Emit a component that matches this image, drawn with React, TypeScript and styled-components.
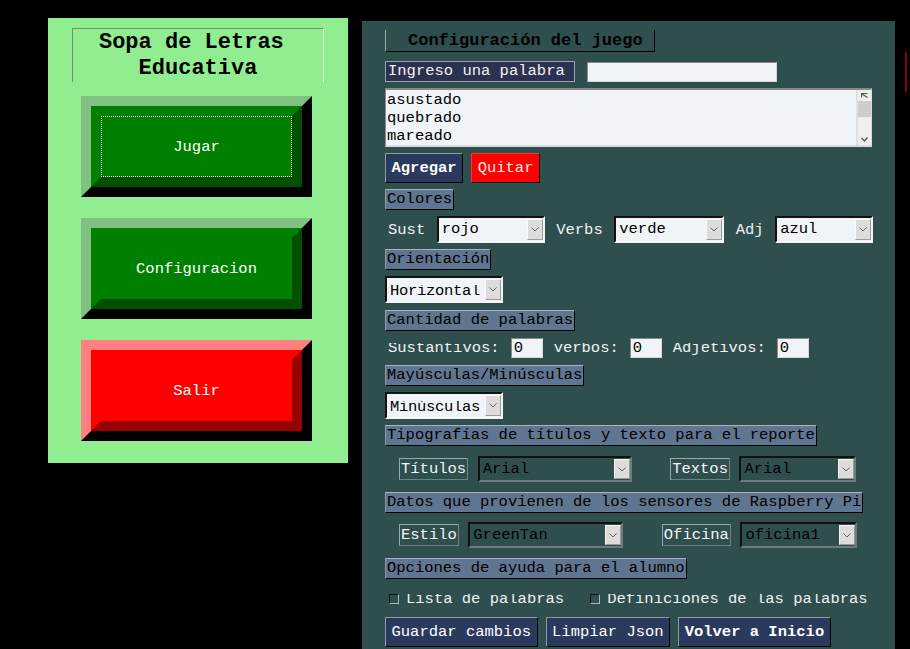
import React from "react";
import styled, { createGlobalStyle, css } from "styled-components";

type Tone = "green" | "red";

const tones: Record<Tone, { face: string; light: string; dark: string }> = {
  green: { face: "#008000", light: "#80c080", dark: "#005000" },
  red: { face: "#ff0000", light: "#ff8080", dark: "#990000" },
};

const GlobalStyle = createGlobalStyle`
  html, body {
    margin: 0;
    padding: 0;
    background: #000;
  }
  body {
    font-family: "Liberation Mono", "Courier New", monospace;
    font-size: 15.5px;
  }
  * {
    box-sizing: border-box;
  }
`;

const Page = styled.div`
  display: flex;
  align-items: flex-start;
  width: 910px;
  height: 649px;
  overflow: hidden;
  background: #000;
`;

/* ---------- left menu ---------- */

const MenuPanel = styled.section`
  margin: 18px 0 0 48px;
  width: 300px;
  height: 445px;
  padding-top: 10px;
  background: #90ee90;
  display: flex;
  flex-direction: column;
  align-items: flex-start;
`;

const TitleBox = styled.h1`
  margin: 0 0 0 24px;
  width: 252px;
  height: 54px;
  padding-top: 1px;
  border-top: 1px solid #6f8f6f;
  border-left: 1px solid #6f8f6f;
  border-right: 1px solid #e6ffe6;
  font-size: 22px;
  font-weight: bold;
  line-height: 26px;
  text-align: center;
  color: #000;
  white-space: pre;
`;

const BevelButton = styled.button<{ $tone: Tone; $first?: boolean }>`
  display: block;
  margin: ${({ $first }) => ($first ? "14px" : "21px")} 0 0 33px;
  width: 231px;
  height: 101px;
  padding: 0;
  border: 10px solid;
  border-color: ${({ $tone }) =>
    `${tones[$tone].light} #000 #000 ${tones[$tone].light}`};
  background: ${({ $tone }) => tones[$tone].face};
  font: inherit;
  cursor: pointer;
`;

const BevelFace = styled.span<{ $tone: Tone }>`
  display: flex;
  height: 100%;
  border: 10px solid;
  border-color: ${({ $tone }) => {
    const t = tones[$tone];
    return `${t.face} ${t.dark} ${t.dark} ${t.face}`;
  }};
`;

const BevelLabel = styled.span<{ $focused?: boolean }>`
  flex: 1;
  display: flex;
  align-items: center;
  justify-content: center;
  color: #fff;
  font-size: 15.5px;
  border: 1px solid transparent;
  ${({ $focused }) =>
    $focused &&
    css`
      border: 1px dotted #fbe6fb;
    `}
`;

/* ---------- right settings ---------- */

const SettingsPanel = styled.section`
  margin: 21px 0 0 14px;
  width: 533px;
  height: 640px;
  padding: 9px 0 0 23px;
  background: #2f4f4f;
  display: flex;
  flex-direction: column;
  align-items: flex-start;
`;

const EdgeMark = styled.div`
  margin: 52px 0 0 10px;
  width: 2px;
  height: 40px;
  background: #8b0000;
`;

const Row = styled.div<{ $mt: number; $gap?: number; $indent?: number }>`
  display: flex;
  align-items: center;
  margin-top: ${({ $mt }) => $mt}px;
  gap: ${({ $gap }) => $gap ?? 0}px;
  padding-left: ${({ $indent }) => $indent ?? 0}px;
`;

const PanelTitle = styled.div`
  height: 22px;
  padding: 0 11px 0 22px;
  border-left: 1px solid #9aa8a8;
  border-right: 1px solid #000;
  border-bottom: 1px solid #000;
  font-size: 17px;
  font-weight: bold;
  line-height: 21px;
  color: #000;
`;

const Heading = styled.div<{ $mt: number }>`
  margin-top: ${({ $mt }) => $mt}px;
  height: 21px;
  padding: 0 1px 0 1px;
  border: 1px solid;
  border-color: #a9b4c2 #000 #000 #8d99aa;
  background: #5f7590;
  line-height: 19px;
  color: #000;
  white-space: pre;
`;

const Caption = styled.div`
  height: 21px;
  padding: 0 9px 0 2px;
  border: 1px solid #9aa4b2;
  background: #2c3150;
  color: #f2f2f2;
  line-height: 19px;
`;

const TextEntry = styled.div<{ $w: number; $h?: number }>`
  width: ${({ $w }) => $w}px;
  height: ${({ $h }) => $h ?? 20}px;
  padding-left: 2px;
  border-top: 1px solid #8a8a8a;
  border-left: 1px solid #8a8a8a;
  border-bottom: 1px solid #d8d8d8;
  border-right: 1px solid #d8d8d8;
  background: #f0f4f8;
  color: #000;
  line-height: 18px;
`;

const Listbox = styled.div`
  display: flex;
  width: 487px;
  height: 59px;
  border-top: 2px solid #8a8a8a;
  border-left: 1px solid #8a8a8a;
  border-bottom: 2px solid #d8dce0;
  border-right: 1px solid #d8dce0;
  background: #f0f4f8;
`;

const ListItems = styled.ul`
  flex: 1;
  margin: 0;
  padding: 1px 0 0 1px;
  list-style: none;
  line-height: 18px;
  color: #000;
  overflow: hidden;
`;

const Scrollbar = styled.div`
  width: 15px;
  display: flex;
  flex-direction: column;
  align-items: center;
  background: #efefef;
  border-left: 2px solid #dde1e5;
`;

const ScrollThumb = styled.div`
  width: 13px;
  height: 16px;
  margin-top: 3px;
  background: #cdcdcd;
`;

const ScrollArrow = styled.svg<{ $mt?: string }>`
  display: block;
  margin-top: ${({ $mt }) => $mt ?? "4px"};
`;

const ActionButton = styled.button<{ $bold?: boolean; $danger?: boolean }>`
  height: 30px;
  padding: 0 5.5px;
  border: 1px solid;
  border-color: ${({ $danger }) =>
    $danger ? "#ff3030 #000 #000 #ff3030" : "#8c9ab0 #000 #000 #8c9ab0"};
  background: ${({ $danger }) => ($danger ? "#ff0000" : "#2a3a5c")};
  color: ${({ $danger }) => ($danger ? "#ffe8e8" : "#fff")};
  font: inherit;
  font-weight: ${({ $bold }) => ($bold ? "bold" : "normal")};
  white-space: pre;
  cursor: pointer;
`;

const FieldText = styled.span<{ $clip?: boolean }>`
  color: #eef2f2;
  white-space: pre;
  ${({ $clip }) =>
    $clip &&
    css`
      clip-path: inset(4px 0 0 0);
    `}
`;

const Combo = styled.div<{ $w: number; $dark?: boolean; $h?: number }>`
  display: flex;
  align-items: stretch;
  width: ${({ $w }) => $w}px;
  height: ${({ $h }) => $h ?? 27}px;
  border-top: 2px solid #111;
  border-left: 2px solid #111;
  border-bottom: 2px solid ${({ $dark }) => ($dark ? "#6c7c7c" : "#f4f4f4")};
  border-right: 2px solid ${({ $dark }) => ($dark ? "#6c7c7c" : "#f4f4f4")};
  background: ${({ $dark }) => ($dark ? "#2f4f4f" : "#f0f4f8")};
  color: #000;
`;

const ComboValue = styled.span<{ $clip?: boolean }>`
  flex: 1;
  padding-left: 3px;
  line-height: 22px;
  white-space: pre;
  overflow: hidden;
  ${({ $clip }) =>
    $clip &&
    css`
      padding-top: 2px;
      clip-path: inset(7px 0 0 0);
      letter-spacing: -0.3px;
    `}
`;

const DropButton = styled.span`
  width: 16px;
  margin: 1px 0 1px 0;
  display: flex;
  align-items: center;
  justify-content: center;
  background: #dcdcdc;
  border: 1px solid;
  border-color: #f8f8f8 #9a9a9a #9a9a9a #f8f8f8;
`;

const BoxLabel = styled.span<{ $push?: number }>`
  height: 22px;
  margin-left: ${({ $push }) => $push ?? 0}px;
  padding: 0 1px;
  border: 1px solid;
  border-color: #93abab #6b8383 #6b8383 #93abab;
  color: #f2f6f6;
  line-height: 20px;
`;

const CheckItem = styled.label`
  display: flex;
  align-items: center;
  gap: 7px;
  color: #eef2f2;
`;

const CheckBox = styled.span`
  width: 10px;
  height: 10px;
  border: 1px solid;
  border-color: #101010 #b0b8b8 #b0b8b8 #101010;
`;

const Chevron = () => (
  <svg width="8" height="5" viewBox="0 0 8 5">
    <polyline points="0.5,0.5 4,4 7.5,0.5" fill="none" stroke="#666" strokeWidth="1" />
  </svg>
);

const ComboBox: React.FC<{
  value: string;
  width: number;
  dark?: boolean;
  clip?: boolean;
}> = ({ value, width, dark, clip }) => (
  <Combo $w={width} $dark={dark} $h={dark ? 26 : 27}>
    <ComboValue $clip={clip}>{value}</ComboValue>
    <DropButton>
      <Chevron />
    </DropButton>
  </Combo>
);

const menuItems: { label: string; tone: Tone; focused?: boolean }[] = [
  { label: "Jugar", tone: "green", focused: true },
  { label: "Configuracion", tone: "green" },
  { label: "Salir", tone: "red" },
];

const words = ["asustado", "quebrado", "mareado"];

export default function App() {
  return (
    <>
      <GlobalStyle />
      <Page>
        <MenuPanel>
          <TitleBox>{"Sopa de Letras\u00a0\nEducativa"}</TitleBox>
          {menuItems.map((item, i) => (
            <BevelButton key={item.label} $tone={item.tone} $first={i === 0}>
              <BevelFace $tone={item.tone}>
                <BevelLabel $focused={item.focused}>{item.label}</BevelLabel>
              </BevelFace>
            </BevelButton>
          ))}
        </MenuPanel>

        <SettingsPanel>
          <PanelTitle>Configuración del juego</PanelTitle>

          <Row $mt={9} $gap={12}>
            <Caption>Ingreso una palabra</Caption>
            <TextEntry $w={190} />
          </Row>

          <Row $mt={6}>
            <Listbox>
              <ListItems>
                {words.map((w) => (
                  <li key={w}>{w}</li>
                ))}
              </ListItems>
              <Scrollbar>
                <ScrollArrow width="7" height="5" viewBox="0 0 7 5" $mt="3px">
                  <path d="M0.5,4.5 L0.5,0.5 L6.5,0.5 M1,1 L6.5,4.5" fill="none" stroke="#555" strokeWidth="1.2" />
                </ScrollArrow>
                <ScrollThumb />
                <ScrollArrow width="7" height="5" viewBox="0 0 7 5" $mt="20px">
                  <polyline points="0.5,1 3.5,4 6.5,0.5" fill="none" stroke="#555" strokeWidth="1.4" />
                </ScrollArrow>
              </Scrollbar>
            </Listbox>
          </Row>

          <Row $mt={6} $gap={8}>
            <ActionButton $bold>Agregar</ActionButton>
            <ActionButton $danger>Quitar</ActionButton>
          </Row>

          <Heading $mt={6}>Colores</Heading>
          <Row $mt={6} $gap={11.5} $indent={3}>
            <FieldText>Sust</FieldText>
            <ComboBox value="rojo" width={108} />
            <FieldText>Verbs</FieldText>
            <ComboBox value="verde" width={110} />
            <FieldText>Adj</FieldText>
            <ComboBox value="azul" width={98} />
          </Row>

          <Heading $mt={6}>Orientación</Heading>
          <Row $mt={6}>
            <ComboBox value="Horizontal" width={118} clip />
          </Row>

          <Heading $mt={7}>Cantidad de palabras</Heading>
          <Row $mt={7} $gap={11} $indent={3}>
            <FieldText $clip>Sustantivos:</FieldText>
            <TextEntry $w={32}>0</TextEntry>
            <FieldText $clip>verbos:</FieldText>
            <TextEntry $w={32}>0</TextEntry>
            <FieldText $clip>Adjetivos:</FieldText>
            <TextEntry $w={32}>0</TextEntry>
          </Row>

          <Heading $mt={7}>Mayúsculas/Minúsculas</Heading>
          <Row $mt={6}>
            <ComboBox value="Minúsculas" width={118} clip />
          </Row>

          <Heading $mt={6}>Tipografías de títulos y texto para el reporte</Heading>
          <Row $mt={10} $gap={9.5} $indent={14}>
            <BoxLabel>Títulos</BoxLabel>
            <ComboBox value="Arial" width={154} dark />
            <BoxLabel $push={29}>Textos</BoxLabel>
            <ComboBox value="Arial" width={117} dark />
          </Row>

          <Heading $mt={10}>Datos que provienen de los sensores de Raspberry Pi</Heading>
          <Row $mt={9} $gap={9.5} $indent={14}>
            <BoxLabel>Estilo</BoxLabel>
            <ComboBox value="GreenTan" width={155} dark />
            <BoxLabel $push={29}>Oficina</BoxLabel>
            <ComboBox value="oficina1" width={117} dark />
          </Row>

          <Heading $mt={10}>Opciones de ayuda para el alumno</Heading>
          <Row $mt={11} $gap={26} $indent={4}>
            <CheckItem>
              <CheckBox />
              <FieldText $clip>Lista de palabras</FieldText>
            </CheckItem>
            <CheckItem>
              <CheckBox />
              <FieldText $clip>Definiciones de las palabras</FieldText>
            </CheckItem>
          </Row>

          <Row $mt={9} $gap={8}>
            <ActionButton>Guardar cambios</ActionButton>
            <ActionButton>Limpiar Json</ActionButton>
            <ActionButton $bold>Volver a Inicio</ActionButton>
          </Row>
        </SettingsPanel>

        <EdgeMark />
      </Page>
    </>
  );
}
